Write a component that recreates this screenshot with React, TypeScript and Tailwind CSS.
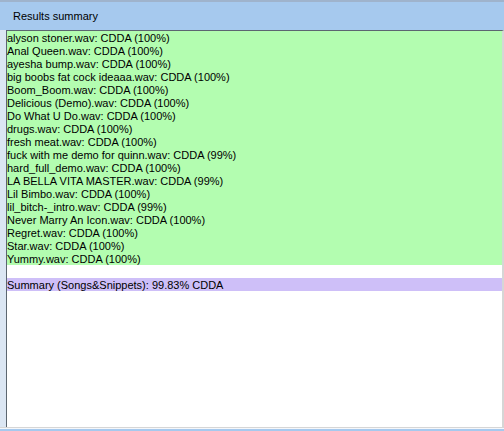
import React from "react";

const lines = [
  "alyson stoner.wav: CDDA (100%)",
  "Anal Queen.wav: CDDA (100%)",
  "ayesha bump.wav: CDDA (100%)",
  "big boobs fat cock ideaaa.wav: CDDA (100%)",
  "Boom_Boom.wav: CDDA (100%)",
  "Delicious (Demo).wav: CDDA (100%)",
  "Do What U Do.wav: CDDA (100%)",
  "drugs.wav: CDDA (100%)",
  "fresh meat.wav: CDDA (100%)",
  "fuck with me demo for quinn.wav: CDDA (99%)",
  "hard_full_demo.wav: CDDA (100%)",
  "LA BELLA VITA MASTER.wav: CDDA (99%)",
  "Lil Bimbo.wav: CDDA (100%)",
  "lil_bitch-_intro.wav: CDDA (99%)",
  "Never Marry An Icon.wav: CDDA (100%)",
  "Regret.wav: CDDA (100%)",
  "Star.wav: CDDA (100%)",
  "Yummy.wav: CDDA (100%)",
];

export default function App() {
  return (
    <div
      className="w-[504px] h-[431px] flex flex-col bg-[#dbe6f3] overflow-hidden text-black"
      style={{ fontFamily: '"Liberation Sans", Arial, sans-serif' }}
    >
      <div className="h-[2px] bg-[#9fb3cc]" />
      <div className="h-[28px] bg-[#a6c9ee] flex items-center pl-[13px] text-[11px]">
        Results summary
      </div>
      <div className="flex flex-1">
        <div className="w-[6px] bg-[#dbe6f3]" />
        <div className="flex-1 flex flex-col border-l border-t border-[#5c6670] border-r-2 border-r-[#d6d6d6] bg-white">
          <div className="bg-[#b3fdb0] text-[11px]">
            {lines.map((l) => (
              <div key={l} className="h-[13px] leading-[15px] whitespace-nowrap">{l}</div>
            ))}
          </div>
          <div className="h-[13px]" />
          <div className="bg-[#cebff8] h-[13px] text-[11px] leading-[15px] whitespace-nowrap">
            Summary (Songs&amp;Snippets): 99.83% CDDA
          </div>
          <div className="flex-1" />
        </div>
      </div>
      <div className="h-[1px] bg-[#d6d6d6]" />
      <div className="h-[1px] bg-[#f4f7fb]" />
      <div className="h-[2px] bg-[#a6c9ee]" />
    </div>
  );
}
